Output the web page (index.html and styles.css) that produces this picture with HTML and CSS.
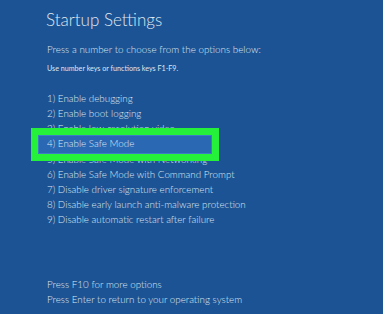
FILE: index.html
```html
<!DOCTYPE html>
<html>
<head>
<meta charset="utf-8">
<link rel="stylesheet" href="styles.css">
</head>
<body>
<div class="screen">
  <h1 class="title">Startup Settings</h1>
  <p class="lead">Press a number to choose from the options below:</p>
  <p class="hint">Use number keys or functions keys F1-F9.</p>
  <ul class="options">
    <li>1) Enable debugging</li>
    <li>2) Enable boot logging</li>
    <li>3) Enable low-resolution video</li>
    <li class="selected"><span>4) Enable Safe Mode</span></li>
    <li>5) Enable Safe Mode with Networking</li>
    <li>6) Enable Safe Mode with Command Prompt</li>
    <li>7) Disable driver signature enforcement</li>
    <li>8) Disable early launch anti-malware protection</li>
    <li>9) Disable automatic restart after failure</li>
  </ul>
  <div class="footer">
    <p>Press F10 for more options</p>
    <p>Press Enter to return to your operating system</p>
  </div>
</div>
</body>
</html>
```
FILE: styles.css
```css
html, body {
  margin: 0;
  padding: 0;
  background: #1c5394;
}
.screen {
  width: 383px;
  height: 314px;
  box-sizing: border-box;
  padding: 6px 0 0 47px;
  display: flex;
  flex-direction: column;
  font-family: Lato, "Open Sans", "Liberation Sans", sans-serif;
  color: #dfe7f1;
  overflow: hidden;
}
.title {
  margin: 0 0 0 -1px;
  font-size: 17px;
  font-weight: 300;
  line-height: 28px;
  letter-spacing: 0;
}
.lead {
  margin: 8px 0 0;
  font-size: 9.85px;
  font-weight: 300;
  line-height: 14px;
}
.hint {
  margin: 8px 0 0;
  font-size: 7.15px;
  font-weight: 400;
  line-height: 10px;
}
.options {
  list-style: none;
  margin: 17px 0 0;
  padding: 0;
  font-size: 9.8px;
  font-weight: 300;
  line-height: 15.12px;
}
.options li {
  white-space: nowrap;
}
.selected {
  position: relative;
  z-index: 1;
}
.selected::before {
  content: "";
  position: absolute;
  left: -16px;
  top: -8px;
  width: 188px;
  height: 33px;
  box-sizing: border-box;
  border: 7px solid #25f03a;
  background: #2a68b4;
  box-shadow: inset 0 0 0 1px #3c7dc6;
  z-index: -1;
}
.selected span {
  position: relative;
}
.footer {
  margin-top: auto;
  margin-bottom: 7px;
  font-size: 9.8px;
  font-weight: 300;
  line-height: 15px;
}
.footer p {
  margin: 0;
}
```
